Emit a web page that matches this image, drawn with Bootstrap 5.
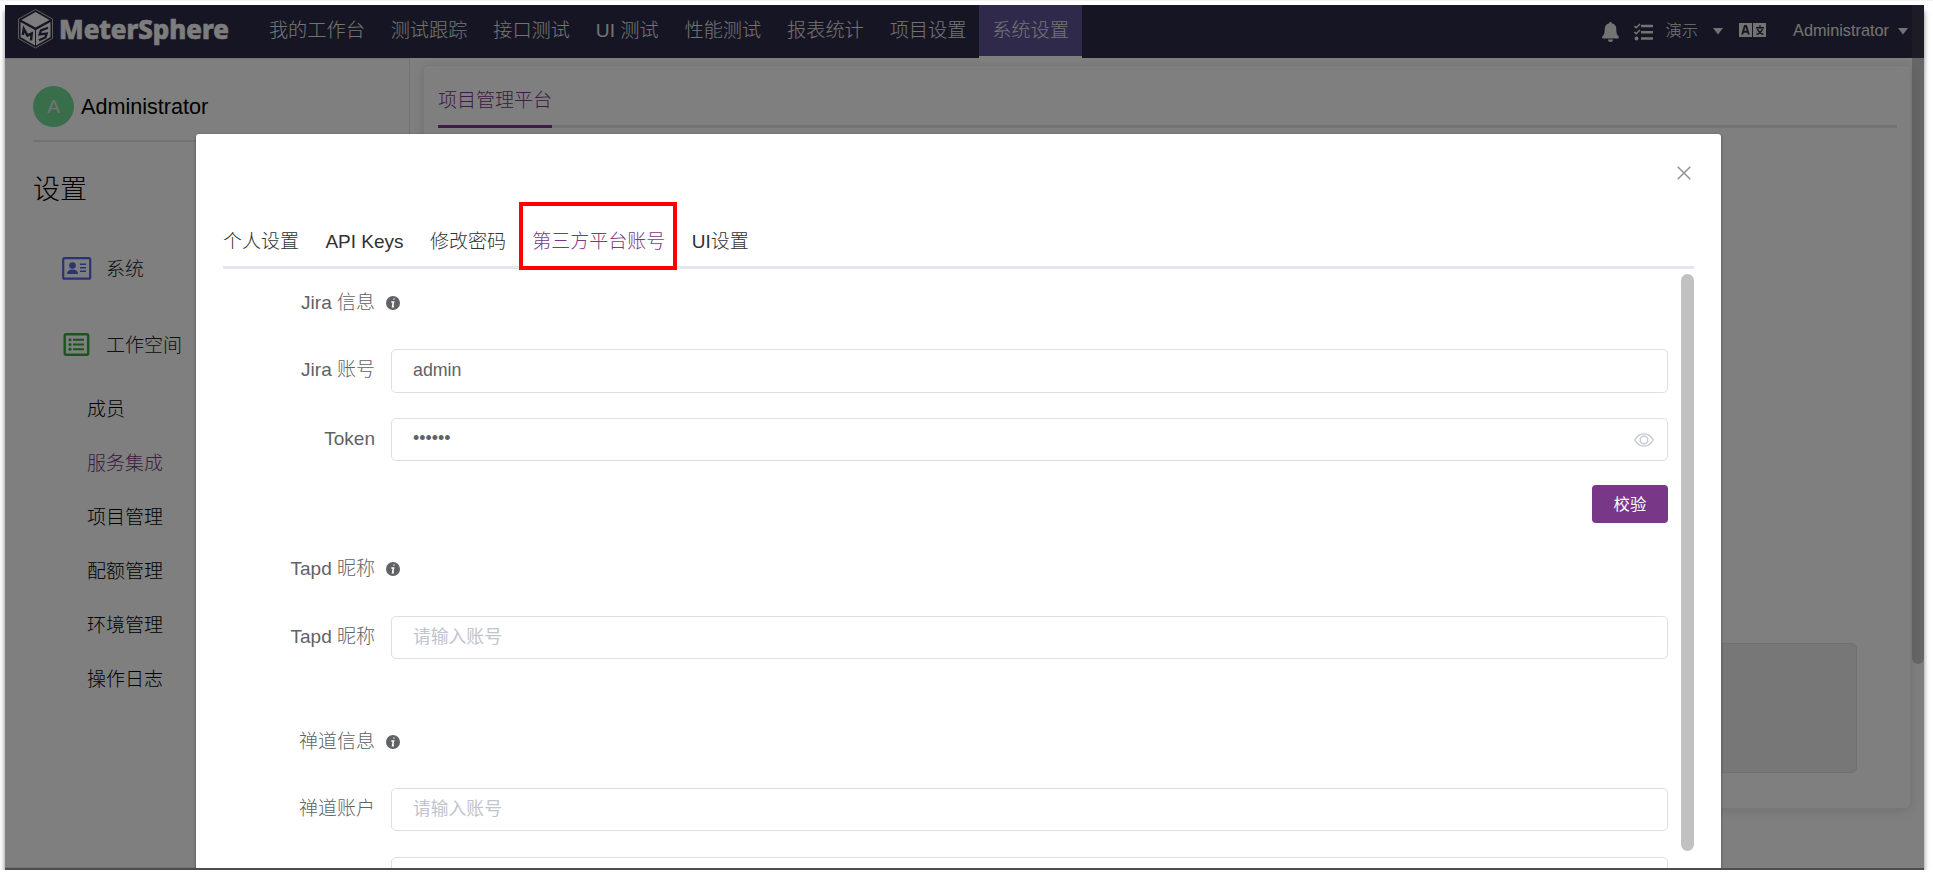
<!DOCTYPE html>
<html lang="zh-CN">
<head>
<meta charset="utf-8">
<title>MeterSphere</title>
<link href="https://cdn.jsdelivr.net/npm/bootstrap@5.3.0/dist/css/bootstrap.min.css" rel="stylesheet">
<style>
body{font-family:"Liberation Sans","Noto Sans CJK SC",sans-serif;font-size:19px;font-weight:300;line-height:1;background:#fff;overflow:hidden}
.stage{height:870px;padding:4px 9px 0 5px;border-top:1px solid #f2f2f2}
.win{height:865px;box-shadow:0 6px 5px 0 rgba(0,0,0,.5);background:#fff;border-bottom:2px solid #4d4d4d}
.topbar{height:53px;background:#2d2b47;color:#e6e6e6}
.brand-box{width:250px;padding-left:12px}
.brand-box svg{overflow:visible}
.top-link{height:53px;line-height:52px;padding:0 12.920px;font-size:19.2px;color:#e6e6e6;white-space:nowrap}
.top-link.on{background:#5f5496;border-bottom:2px solid #fff}
.tools{font-size:16.3px;height:53px;padding:0 16px 3px 0}
.tools svg{position:relative}
.side{width:405px;border:1px solid #e6e6e6;border-left:0;padding:27px 0 0 28px;color:#000}
.avatar{width:41px;height:41px;background:#72dc94;color:#e8e8e8;font-size:19px}
.hr-side{height:2px;background:#e6e6ef;margin-top:13px}
.menu-head{height:76px;color:#202020;padding-left:29px}
.menu-head svg{width:31px;margin-right:13px}
.sub a{display:flex;align-items:center;height:54px;padding-left:54px;color:#202020;text-decoration:none}
.sub a.on{color:#783887}
.panel{margin:7px 13px 0 13px;height:744px;border:1px solid #ebeef5;border-radius:5px;box-shadow:0 2px 12px rgba(0,0,0,.12);padding:15px 13px 15px 14px}
.panel-tabs{height:47px;border-bottom:3px solid #e4e7ed}
.panel-tabs span{height:47px;padding-top:10px;border-bottom:3px solid #783887;color:#783887}
.block{height:130px;width:1392px;margin:515px 0 0 27px;background:#eee;border:1px solid #e0e0e0;border-radius:5px}
.thumb{top:0;right:0;width:12px;height:659px;border-radius:0 0 7px 7px;background:rgba(90,90,90,.31)}
.shade{inset:0 0 0 0;background:rgba(0,0,0,.5)}
.dialog{left:191px;top:129px;width:1525px;height:734px;background:#fff;border-radius:3px 3px 0 0;box-shadow:0 1px 3px rgba(0,0,0,.45);padding:32px 27px 0;overflow:hidden;clip-path:inset(-6px -6px 0 -6px)}
.tabs{height:89px;gap:26.400px;border-bottom:3px solid #e4e7ed;color:#303133;padding-top:52px}
.tabs .on{color:#783887}
.ring{border:4px solid #f00;inset:-30px -12px -4px -13px}
.formbox{color:#606266;width:1445px}
.f-row{display:flex;align-items:center}
.lab{width:152px;margin-right:1px;text-align:right;flex:none;white-space:nowrap;padding-bottom:2px}
label.lab{padding-bottom:4px}
.inp{margin-left:15px;width:1277px;height:43px;margin-bottom:1px;border:1px solid #dcdfe6;border-radius:5px;padding:0 19px 1px 21px;font-size:17.800px;color:#606266;background:#fff}
.inp::placeholder{color:#c0c4cc;opacity:1}
.inp-tall{height:44px;margin-bottom:0}
.info{margin-left:10px}
.check{width:76px;height:38px;background:#783887;border:0;border-radius:4px;color:#fff;font-size:16.4px;font-weight:400;padding:0}
.rail{width:13px;height:577px;border-radius:7px;background:#c1c1c1;margin-top:5px}
</style>
</head>
<body>
<div class="stage overflow-hidden">
<div class="win position-relative">
  <nav class="topbar d-flex">
    <div class="brand-box flex-shrink-0">
      <svg width="215" height="50" viewBox="0 0 215 50">
        <path d="M18.500 4.500 35.500 14v19.500l-17 9.500-17-9.500V14z" fill="none" stroke="#b8b8b8" stroke-width="1"/>
        <path d="M18.500 7 32.500 15 18.500 22.500 4.500 15z" fill="#fafafa"/><path d="M3.500 17 18 25v15.500L3.500 32z" fill="#f2f2f2"/><path d="M33.500 17 19 25v15.500l14.500-8.500z" fill="#f2f2f2"/>
        <path d="M5.800 30l1-6 3.700 6.500 4.200-2-.7 7" fill="none" stroke="#2d2b47" stroke-width="2.500"/><path d="M31 22.800l-7 2.700-1.300 3.800 7-.8-1.300 4-6.400 2.800" fill="none" stroke="#2d2b47" stroke-width="2.300"/>
        <text x="42" y="34" textLength="170" lengthAdjust="spacingAndGlyphs" font-family="Noto Sans" font-weight="800" font-size="27" fill="#fafafa" stroke="#fafafa" stroke-width=".7">MeterSphere</text>
      </svg>
    </div>
    <div class="top-link" style="margin-left:1px">我的工作台</div><div class="top-link">测试跟踪</div><div class="top-link">接口测试</div><div class="top-link">UI 测试</div><div class="top-link">性能测试</div><div class="top-link">报表统计</div><div class="top-link">项目设置</div><div class="top-link on">系统设置</div>
    <div class="tools d-flex align-items-center ms-auto">
      <svg style="top:2px" width="17" height="20" viewBox="0 0 17 20" fill="#e6e6e6"><path d="M8.500 0c.8 0 1.300.5 1.300 1.300 3 .7 4.500 3 4.500 5.700 0 4 .5 5.500 2.200 7.200.9 1 .3 2.300-.9 2.300H1.400c-1.200 0-1.800-1.300-.9-2.300C2.200 12.500 2.700 11 2.700 7c0-2.700 1.500-5 4.500-5.700C7.200.5 7.700 0 8.500 0zM6 17.500h5a2.500 2.500 0 0 1-5 0z"/></svg>
      <svg style="top:2px;margin-left:15px" width="19" height="18" viewBox="0 0 19 18" fill="none" stroke="#e6e6e6"><path d="M7 3h12M7 9.300h12M7 15.500h12" stroke-width="2.600"/><path d="m.5 3 1.700 1.700L6 1M.5 9 2.200 10.700 6 7" stroke-width="1.600"/><circle cx="2.500" cy="15.500" r="1.900" fill="#e6e6e6" stroke="none"/></svg>
      <span style="margin-left:13px">演示</span>
      <svg style="margin-left:15px;top:1px" width="10" height="7" fill="#e6e6e6"><path d="M0 0h10L5 6.500z"/></svg>
      <svg style="margin:0 27px 0 16px" width="27" height="14" viewBox="0 0 27 14"><path d="M0 0h13v14H0zM14 0h13v14H14z" fill="#e6e6e6"/><path d="M3.200 11.500 5.800 3h1.400l2.600 8.500M4.300 8.800h4.400" fill="none" stroke="#2d2b47" stroke-width="1.900"/><path d="M17 4.700h8M21 2.500v2M18.500 6c1 2.800 3 4.500 6 5.500M23.500 6c-1 2.800-3 4.500-6 5.500" fill="none" stroke="#2d2b47" stroke-width="1.600"/></svg>
      <span>Administrator</span>
      <svg style="margin-left:9px;top:1px" width="10" height="7" fill="#e6e6e6"><path d="M0 0h10L5 6.500z"/></svg>
    </div>
  </nav>
  <div class="d-flex" style="height:810px">
    <aside class="side flex-shrink-0">
      <div class="d-flex align-items-center"><div class="avatar rounded-circle d-flex align-items-center justify-content-center">A</div><span style="font-size:21.600px;margin-left:7px">Administrator</span></div>
      <div class="hr-side"></div>
      <div style="font-size:27px;margin:35px 0 27px">设置</div>
      <div>
      <div class="menu-head d-flex align-items-center"><svg height="24" viewBox="0 0 31 24" fill="#5468e8"><rect x="1.200" y="1.200" width="27" height="20.500" rx="1.500" fill="none" stroke="#5468e8" stroke-width="2.200"/><circle cx="10.500" cy="8.500" r="3.300"/><path d="M5 17c0-3 2-4.500 5.500-4.500S16 14 16 17z"/><path d="M18 6.500h6v1.500h-6zM18 10h6v1.500h-6zM18 13.500h6V15h-6z"/></svg>系统</div>
      <div class="menu-head d-flex align-items-center"><svg height="24" viewBox="-1.500 0 31 24" fill="#36a93d"><rect x="1.200" y="1.200" width="23.500" height="20.500" rx="1.500" fill="none" stroke="#36a93d" stroke-width="2.400"/><circle cx="6.500" cy="6.800" r="1.600"/><circle cx="6.500" cy="11.500" r="1.600"/><circle cx="6.500" cy="16.200" r="1.600"/><path d="M9.500 5.800h11v2h-11zM9.500 10.500h11v2h-11zM9.500 15.200h11v2h-11z"/></svg>工作空间</div>
      <div class="sub" style="margin-top:-1px"><a>成员</a><a class="on">服务集成</a><a>项目管理</a><a>配额管理</a><a>环境管理</a><a>操作日志</a></div>
      </div>
    </aside>
    <main class="flex-grow-1">
      <section class="panel">
        <div class="panel-tabs d-flex"><span>项目管理平台</span></div>
        <div class="block"></div>
      </section>
    </main>
  </div>
  <div class="thumb position-absolute"></div>
  <div class="shade position-absolute"></div>
  <div class="dialog position-absolute">
    <div class="d-flex justify-content-end" style="height:14px;padding-right:3px"><svg width="14" height="14"><path d="m.7.7 12.600 12.600M13.300.7.700 13.300" stroke="#909399" stroke-width="1.500"/></svg></div>
    <div class="tabs d-flex"><span>个人设置</span><span>API Keys</span><span>修改密码</span><span class="on position-relative">第三方平台账号<i class="ring position-absolute"></i></span><span>UI设置</span></div>
    <div class="d-flex justify-content-between">
      <form class="formbox">
        <div class="f-row" style="height:68px"><span class="lab">Jira 信息</span><svg class="info" width="14" height="14" viewBox="0 0 14 14"><circle cx="7" cy="7" r="7" fill="#606266"/><path d="M5.300 6h2.200l-.9 4.600h1.300M7.500 3h1" fill="none" stroke="#fff" stroke-width="1.600"/></svg></div>
        <div class="f-row" style="margin-top:12px"><label class="lab">Jira 账号</label><input class="inp inp-tall" value="admin"></div>
        <div class="f-row" style="margin-top:25px"><label class="lab">Token</label><div class="inp d-flex align-items-center justify-content-between"><span>••••••</span><svg style="margin:2px -6px 0 0" width="20" height="14" viewBox="0 0 20 14" fill="none" stroke="#c0c4cc" stroke-width="1.300"><path d="M.8 7C3 3 6 .9 10 .9S17 3 19.200 7C17 11 14 13.100 10 13.100S3 11 .8 7z"/><circle cx="10" cy="7" r="3.800"/></svg></div></div>
        <div class="text-end" style="margin-top:23px"><button type="button" class="btn check">校验</button></div>
        <div class="f-row" style="height:40px;margin-top:26px"><span class="lab">Tapd 昵称</span><svg class="info" width="14" height="14" viewBox="0 0 14 14"><circle cx="7" cy="7" r="7" fill="#606266"/><path d="M5.300 6h2.200l-.9 4.600h1.300M7.500 3h1" fill="none" stroke="#fff" stroke-width="1.600"/></svg></div>
        <div class="f-row" style="margin-top:27px"><label class="lab">Tapd 昵称</label><input class="inp" placeholder="请输入账号"></div>
        <div class="f-row" style="height:40px;margin-top:62px"><span class="lab">禅道信息</span><svg class="info" width="14" height="14" viewBox="0 0 14 14"><circle cx="7" cy="7" r="7" fill="#606266"/><path d="M5.300 6h2.200l-.9 4.600h1.300M7.500 3h1" fill="none" stroke="#fff" stroke-width="1.600"/></svg></div>
        <div class="f-row" style="margin-top:26px"><label class="lab">禅道账户</label><input class="inp" placeholder="请输入账号"></div>
        <div class="f-row" style="margin-top:25px"><label class="lab"></label><input class="inp"></div>
      </form>
      <div class="rail"></div>
    </div>
  </div>
</div>
</div>
<script src="https://cdn.jsdelivr.net/npm/bootstrap@5.3.0/dist/js/bootstrap.bundle.min.js"></script>
</body>
</html>
